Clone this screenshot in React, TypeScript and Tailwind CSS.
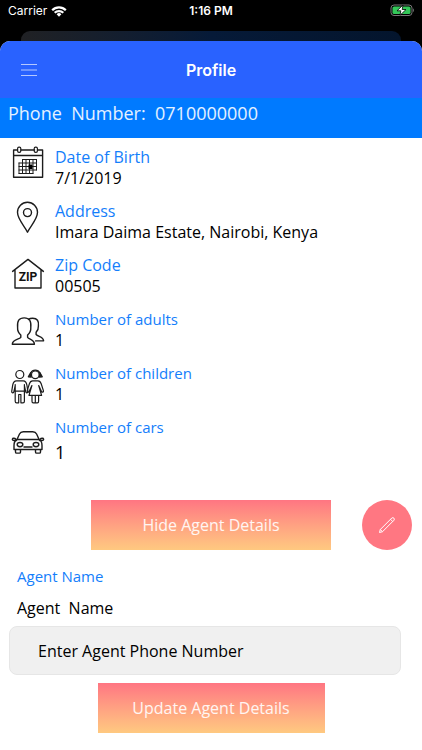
import type { ReactNode } from 'react'

function Icon({ children }: { children: ReactNode }) {
  return (
    <svg
      viewBox="0 0 36 54"
      className="h-[54px] w-9 shrink-0"
      fill="none"
      stroke="#1c1c1c"
      strokeWidth="1.4"
      strokeLinecap="round"
      strokeLinejoin="round"
      aria-hidden="true"
    >
      {children}
    </svg>
  )
}

const calendarIcon = (
  <Icon>
    <path d="M7.5 4H3.6v27.3h29V4h-4.500M11 4h13.500M3.600 9.500h29" />
    <rect x="7.600" y="1.200" width="3.200" height="5.200" rx="1.400" strokeWidth="1.200" />
    <rect x="24.200" y="1.200" width="3.200" height="5.200" rx="1.400" strokeWidth="1.200" />
    <path
      d="M12.500 13.500h14M9 17h17.500M9 20.500h17.500M9 24h17.500M9 27.500h14M9 17v10.500M12.500 13.500v14M16 13.500v14M19.500 13.500v14M23 13.500v14M26.500 13.500V24"
      strokeWidth="1"
    />
    <rect x="18.500" y="18.500" width="4" height="4.500" fill="#000" stroke="none" />
  </Icon>
)

const pinIcon = (
  <Icon>
    <path d="M17.5 32.2C15 26.5 7.5 19.5 7.5 12.3a10 10 0 0 1 20 0c0 7.2-7.5 14.2-10 19.9z" />
    <circle cx="17.5" cy="12.6" r="4" />
  </Icon>
)

const zipIcon = (
  <Icon>
    <path d="M5 16.200v17.800h26V16.200M2.600 17.400 18 5.400l15.400 12" />
    <text
      x="18"
      y="27"
      textAnchor="middle"
      fill="#111"
      stroke="none"
      className="font-['Roboto','Liberation_Sans',sans-serif] text-[12px] font-bold"
    >
      ZIP
    </text>
  </Icon>
)

const adultsIcon = (
  <Icon>
    <path d="M10.800 27c-2.300-2-3.400-4.600-3.200-7.500-.6-6.600 1.400-9.600 6.600-9.600s7.200 3 6.600 9.600c.2 2.900-.9 5.500-3.200 7.500v2.300c1.500 2.200 6.800 2.200 6.800 6.900H2.300c0-4.700 7-4.700 8.500-6.900z" />
    <path d="M18.500 11.400c1.200-.9 2.700-1.100 4.200-1.100 4.500 0 6.400 2.700 5.700 7.700.2 2.500-.6 4.400-2.300 6.300v2.200c2 2.300 7.300 2 7.500 6.400h-8" />
  </Icon>
)

const childrenIcon = (
  <Icon>
    <g strokeWidth="1.200">
      <circle cx="9.800" cy="12.500" r="4" />
      <path d="M6.500 18.800h6.700c2.400 0 3.300 1.800 3.700 4.400l1 6.100c.2 1.800-1.900 2.100-2.200.4l-1.300-6M5.200 23.700l-1.300 6c-.3 1.700-2.400 1.400-2.200-.4l1-6.100c.4-2.600 1.400-4.400 3.800-4.400M5.200 22.500v6.700h9.200v-6.700M5.200 29.200v10c0 1.200.5 1.600 1.400 1.600h2.100v-8.300h2.200v8.300H13c.9 0 1.400-.4 1.400-1.600v-10" />
      <circle cx="25.300" cy="12.800" r="3.800" />
      <path d="M20.800 11c.8-1.800 2.500-2.800 4.500-2.800s3.700 1 4.500 2.800" />
      <path d="m20.700 10.500-2.400 4.300 2.900.3zM29.900 10.500l2.400 4.300-2.900.3z" fill="#1c1c1c" />
      <path d="M22.600 18.800h5.400c1.800 0 2.600 1.100 3.200 3l2.200 6.800c.5 1.600-1.400 2.200-2 .7l-2.700-5.700 2.900 9.800H19l2.900-9.800-2.700 5.700c-.6 1.500-2.500.9-2-.7l2.200-6.800c.6-1.900 1.400-3 3.200-3zM22 33.400v5.800c0 1.200.4 1.600 1.200 1.600h2.100v-7.400v7.400h2.100c.8 0 1.200-.4 1.200-1.600v-5.800" />
    </g>
  </Icon>
)

const carIcon = (
  <Icon>
    <path d="M7 23.500 9.500 18c.7-1.500 2-2.200 3.800-2.200h9.500c1.800 0 3.100.7 3.800 2.200l2.500 5.500M7 23.500h22.100c1.900 1 2.900 3.500 2.900 6v4H4v-4c0-2.500 1-5 3-6zM5.500 33.500v2.400c0 .8.4 1.200 1.200 1.200h2.600c.8 0 1.200-.4 1.200-1.200v-2.400M25.500 33.500v2.400c0 .8.4 1.200 1.200 1.200h2.600c.8 0 1.200-.4 1.200-1.200v-2.400" />
    <path d="M6.500 24.500H4c-1.200 0-1.800-.8-1.600-1.500.2-1 2.400-1 3.600.2M29.500 24.500H32c1.200 0 1.800-.8 1.600-1.500-.2-1-2.400-1-3.600.2M14 31h8" />
    <ellipse cx="10" cy="28.600" rx="2.800" ry="2.100" />
    <ellipse cx="26" cy="28.600" rx="2.800" ry="2.100" />
  </Icon>
)

const details = [
  { label: 'Date of Birth', value: '7/1/2019', icon: calendarIcon, strong: true },
  { label: 'Address', value: 'Imara Daima Estate, Nairobi, Kenya', icon: pinIcon, strong: true },
  { label: 'Zip Code', value: '00505', icon: zipIcon, strong: true },
  { label: 'Number of adults', value: '1', icon: adultsIcon },
  { label: 'Number of children', value: '1', icon: childrenIcon },
  { label: 'Number of cars', value: '1', icon: carIcon, large: true },
]

function StatusBar() {
  return (
    <div className="grid h-[31px] grid-cols-3 items-start px-2 pt-1 font-['Inter','Liberation_Sans',sans-serif] text-white">
      <div className="flex items-center gap-1 text-xs leading-[14px]">
        <span>Carrier</span>
        <svg viewBox="0 0 16 12" className="h-3 w-4" fill="none" stroke="#fff" strokeWidth="2.200" aria-label="Wi-Fi">
          <path d="M1.200 5.200a9.600 9.600 0 0 1 13.600 0M3.700 7.800a6.100 6.100 0 0 1 8.600 0" />
          <path d="M8 11.800 5.600 9.300a3.400 3.400 0 0 1 4.800 0z" fill="#fff" stroke="none" />
        </svg>
      </div>
      <div className="text-center text-xs font-semibold leading-[14px]">1:16 PM</div>
      <svg viewBox="-2 0 26 12" className="h-3 w-[26px] justify-self-end" aria-label="Battery charging">
        <rect x="1" y="1" width="21" height="10.500" rx="3" fill="none" stroke="#777" />
        <rect x="2.500" y="2.500" width="18" height="7.500" rx="1.600" fill="#34c759" />
        <path d="M23 4.500c1.200.4 1.200 3 0 3.400z" fill="#777" />
        <path d="M13 1 7 6.800h3.800L10 11.300l6-5.800h-3.800z" fill="#fff" stroke="#000" strokeWidth=".8" />
      </svg>
    </div>
  )
}

export default function App() {
  return (
    <div className="min-h-screen bg-black">
      <StatusBar />
      <div className="mx-[21px] h-[10px] rounded-t-[9px] bg-linear-to-r from-[#202124] via-[#061a38] to-[#04152d]" />

      <main className="min-h-[calc(100vh-41px)] overflow-hidden rounded-t-[10px] bg-white font-['Open_Sans','Noto_Sans',sans-serif] text-black">
        <header className="grid h-[57px] grid-cols-[1fr_auto_1fr] items-center bg-[#2962ff] px-5">
          <button type="button" aria-label="Open menu" className="w-[18px]">
            <svg viewBox="0 0 18 14" className="h-[14px] w-[18px]" stroke="#b5c8ff" strokeWidth="1" aria-hidden="true">
              <path d="M1 1.500h16M1 7h16M1 12.500h16" />
            </svg>
          </button>
          <h1 className="font-['Inter','Liberation_Sans',sans-serif] text-base font-semibold text-white">Profile</h1>
        </header>

        <p className="h-10 whitespace-pre bg-[#007aff] px-2 pt-[2px] text-lg leading-[26px] text-white/90">
          Phone  Number:  0710000000
        </p>

        <ul className="px-[10px] pt-2">
          {details.map((item) => (
            <li key={item.label} className="flex h-[54px] gap-[9px]">
              {item.icon}
              <div>
                <h2 className={`leading-[22px] text-[#147efb] ${item.strong ? 'text-[16px] font-medium' : 'text-[15px]'}`}>
                  {item.label}
                </h2>
                <p className={item.large ? 'text-lg leading-7' : 'text-base leading-5'}>{item.value}</p>
              </div>
            </li>
          ))}
        </ul>

        <div className="grid grid-cols-[1fr_240px_1fr] pt-[30px]">
          <button
            type="button"
            className="col-start-2 h-[50px] bg-linear-to-b from-[#ff7582] to-[#ffc980] text-base text-white/90"
          >
            Hide Agent Details
          </button>
          <button
            type="button"
            aria-label="Edit profile"
            className="mr-[10px] flex size-[50px] items-center justify-center justify-self-end rounded-full bg-[#ff7782]"
          >
            <svg viewBox="0 0 18 18" className="size-[18px]" fill="none" stroke="#fff" strokeWidth="1" strokeLinejoin="round" aria-hidden="true">
              <path d="m1.500 16.500.8-3L13.800 2c1.400-1.200 3.400.8 2.200 2.200L4.500 15.700zM2.300 13.500l2.200 2.200M12.500 3.300l2.200 2.200" />
            </svg>
          </button>
        </div>

        <form className="px-[9px] pt-4">
          <h2 className="px-2 text-[15px] leading-5 text-[#147efb]">Agent Name</h2>
          <p className="whitespace-pre px-2 pt-2 text-base leading-7">Agent  Name</p>
          <input
            type="tel"
            aria-label="Agent phone number"
            placeholder="Enter Agent Phone Number"
            className="mt-1 block h-[49px] w-[calc(100%-12px)] rounded-lg border border-[#e6e6e6] bg-[#f0f0f0] px-7 text-base placeholder:text-black"
          />
          <button
            type="button"
            className="mx-auto mt-2 block h-[50px] w-[227px] bg-linear-to-b from-[#ff7582] to-[#ffc980] text-base text-white/90"
          >
            Update Agent Details
          </button>
        </form>
      </main>
    </div>
  )
}
